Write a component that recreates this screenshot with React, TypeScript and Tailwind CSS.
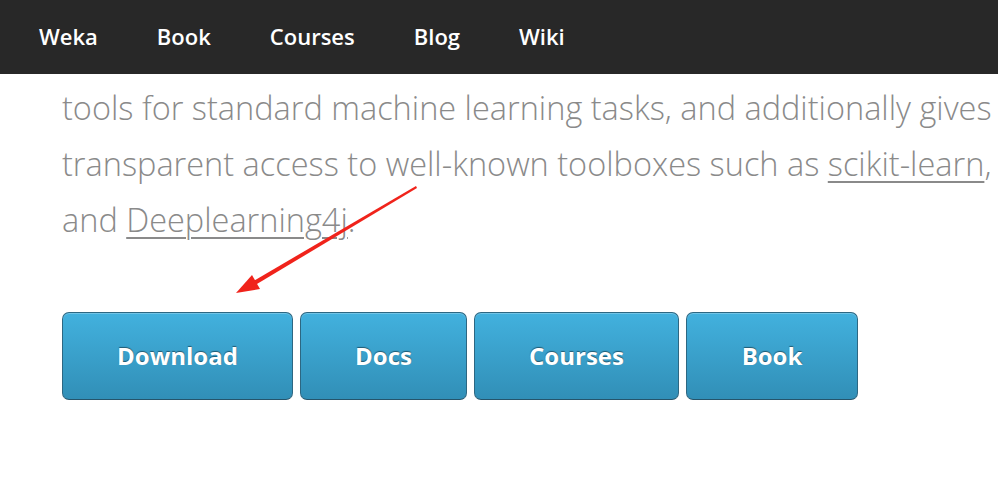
export default function App() {
  const nav = ["Weka", "Book", "Courses", "Blog", "Wiki"];
  const btns = [
    { t: "Download", w: "w-[231px]" },
    { t: "Docs", w: "w-[167px]" },
    { t: "Courses", w: "w-[205px]" },
    { t: "Book", w: "w-[172px]" },
  ];
  return (
    <div className="relative w-[998px] h-[482px] overflow-hidden bg-white" style={{ fontFamily: '"Open Sans", sans-serif' }}>
      <nav className="h-[74px] bg-[#282828] flex items-center pl-[39px] pb-[3px] gap-[59px]">
        {nav.map((n) => (
          <span key={n} className="text-white text-[22px] font-semibold leading-none">{n}</span>
        ))}
      </nav>
      <p className="mt-[6px] pl-[62px] whitespace-nowrap text-[32.5px] leading-[56px] font-light text-[#8a8a8a]">
        tools for standard machine learning tasks, and additionally gives
        <br />
        transparent access to well-known toolboxes such as <span className="underline underline-offset-[5px] decoration-[2px]">scikit-learn</span>,
        <br />
        and <span className="underline underline-offset-[5px] decoration-[2px]">Deeplearning4j</span>.
      </p>
      <div className="mt-[64px] pl-[62px] flex gap-[7px]">
        {btns.map((b) => (
          <div
            key={b.t}
            className={`${b.w} h-[88px] rounded-[7px] border border-[#2d6782] border-b-[#25546b] bg-gradient-to-b from-[#42b1de] to-[#318fb7] flex items-center justify-center text-white text-[24px] font-bold shadow-[inset_0_1px_0_rgba(255,255,255,0.25)] [text-shadow:0_-1px_1px_rgba(0,0,0,0.45)]`}
          >
            {b.t}
          </div>
        ))}
      </div>
      <svg className="absolute left-0 top-0 pointer-events-none" width="998" height="482">
        <polygon points="416,186 417,188 252,287 250,283" fill="#f0231b" />
        <polygon points="236,293 252,275 260,289" fill="#f0231b" />
      </svg>
    </div>
  );
}
